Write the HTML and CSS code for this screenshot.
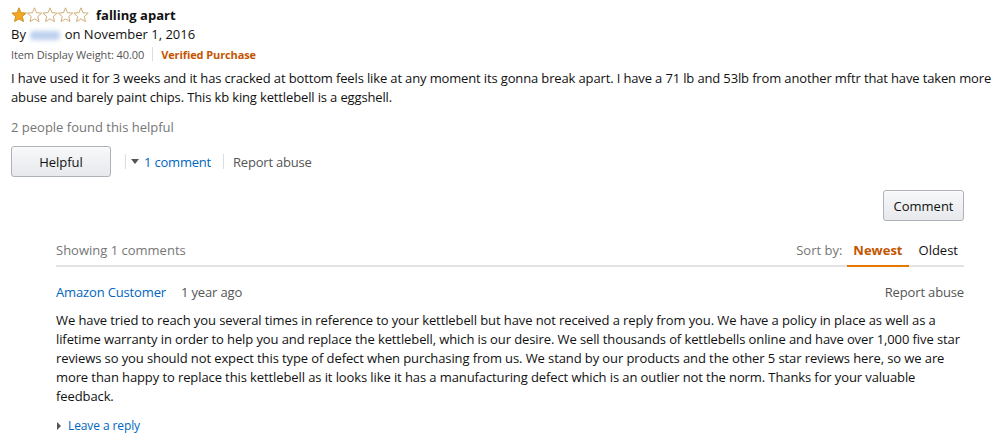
FILE: index.html
```html
<!DOCTYPE html>
<html>
<head>
<meta charset="utf-8">
<link rel="stylesheet" href="styles.css">
</head>
<body>
<div class="review">
  <div class="title-row">
    <span class="stars">
      <svg width="80" height="16" viewBox="0 0 80 16">
        <defs>
          <path id="st" d="M8 0.8 L10 5.7 L15.2 6.1 L11.3 9.5 L12.5 14.6 L8 11.9 L3.5 14.6 L4.7 9.5 L0.8 6.1 L6 5.7 Z"/>
        </defs>
        <use href="#st" x="0" y="0" fill="#f5a623" stroke="#c88a1c" stroke-width="0.9"/>
        <use href="#st" x="15.5" y="0" fill="none" stroke="#c9a56a" stroke-width="0.9"/>
        <use href="#st" x="31" y="0" fill="none" stroke="#c9a56a" stroke-width="0.9"/>
        <use href="#st" x="46.5" y="0" fill="none" stroke="#c9a56a" stroke-width="0.9"/>
        <use href="#st" x="62" y="0" fill="none" stroke="#c9a56a" stroke-width="0.9"/>
      </svg>
    </span>
    <span class="title">falling apart</span>
  </div>
  <div class="byline">By <span class="blur"></span> on November 1, 2016</div>
  <div class="meta"><span>Item Display Weight: 40.00</span><span class="vsep"></span><span class="verified">Verified Purchase</span></div>
  <div class="body">I have used it for 3 weeks and it has cracked at bottom feels like at any moment its gonna break apart. I have a 71 lb and 53lb from another mftr that have taken more abuse and barely paint chips. This kb king kettlebell is a eggshell.</div>
  <div class="helpful-count">2 people found this helpful</div>
  <div class="actions">
    <button class="btn helpful">Helpful</button>
    <span class="vsep tall first"></span>
    <span class="caret-down"></span>
    <a class="link">1 comment</a>
    <span class="vsep tall second"></span>
    <span class="muted-link">Report abuse</span>
  </div>
  <div class="comment-btn-row">
    <button class="btn comment">Comment</button>
  </div>
  <div class="comments">
    <div class="comments-head">
      <span class="showing">Showing 1 comments</span>
      <div class="sort">
        <span class="sort-label">Sort by:</span>
        <span class="tab active">Newest</span>
        <span class="tab">Oldest</span>
      </div>
    </div>
    <div class="comment">
      <div class="comment-head">
        <span class="author">Amazon Customer</span>
        <span class="age">1 year ago</span>
        <span class="muted-link right">Report abuse</span>
      </div>
      <div class="comment-body">We have tried to reach you several times in reference to your kettlebell but have not received a reply from you. We have a policy in place as well as a lifetime warranty in order to help you and replace the kettlebell, which is our desire. We sell thousands of kettlebells online and have over 1,000 five star reviews so you should not expect this type of defect when purchasing from us. We stand by our products and the other 5 star reviews here, so we are more than happy to replace this kettlebell as it looks like it has a manufacturing defect which is an outlier not the norm. Thanks for your valuable feedback.</div>
      <div class="reply"><span class="caret-right"></span><a class="link">Leave a reply</a></div>
    </div>
  </div>
</div>
</body>
</html>
```

FILE: styles.css
```css
* { box-sizing: border-box; }
html, body { margin: 0; padding: 0; background: #fff; }
body {
  font-family: "Open Sans", "Noto Sans", Arial, sans-serif;
  font-size: 13px;
  color: #111;
  width: 1003px;
  height: 440px;
  overflow: hidden;
}
.review { padding: 5px 11px 0 11px; }
.title-row { display: flex; align-items: center; height: 20px; }
.stars { display: flex; width: 85px; }
.stars svg { display: block; }
.title { font-weight: 700; font-size: 13px; color: #111; }
.byline { height: 19px; line-height: 19px; color: #111; }
.blur {
  display: inline-block; width: 30px; height: 9px; vertical-align: middle;
  background: #bcd0ee; border-radius: 4px; filter: blur(2px); margin: 0 1px;
}
.meta { display: flex; align-items: center; font-size: 11px; height: 20px; color: #555; letter-spacing: -0.1px; }
.vsep { display: inline-block; width: 1px; height: 14px; background: #ddd; margin: 0 8px; }
.verified { color: #c45500; font-weight: 700; }
.body { margin-top: 5px; line-height: 19px; width: 985px; letter-spacing: -0.14px; }
.helpful-count { margin-top: 11px; color: #767676; line-height: 19px; }
.actions { display: flex; align-items: center; margin-top: 9px; height: 31px; letter-spacing: -0.2px; }
.btn {
  font-family: inherit; font-size: 13px; color: #111;
  background: linear-gradient(#f7f8fa, #e7e9ec);
  border: 1px solid #adb1b8; border-radius: 3px;
  box-shadow: 0 1px 0 rgba(255,255,255,.6) inset;
  padding: 0; cursor: pointer;
}
.helpful { width: 100px; height: 31px; }
.vsep.tall { height: 15px; }
.vsep.first { margin: 0 5px 0 14px; }
.vsep.second { margin: 0 9px 0 12px; }
.caret-down {
  width: 0; height: 0; border-left: 4px solid transparent; border-right: 4px solid transparent;
  border-top: 5px solid #555; margin-right: 5px;
}
.link { color: #0066c0; text-decoration: none; }
.muted-link { color: #555; }
.comment-btn-row { display: flex; justify-content: flex-end; padding-right: 28px; margin-top: 13px; }
.btn.comment { width: 81px; height: 31px; }
.comments { margin: 13px 28px 0 45px; }
.comments-head {
  display: flex; justify-content: space-between; align-items: flex-end;
  border-bottom: 2px solid #e3e3e3; height: 33px;
}
.showing { color: #767676; line-height: 19px; padding-bottom: 5px; }
.sort { display: flex; align-items: flex-end; }
.sort-label { color: #767676; padding-bottom: 5px; margin-right: 1px; line-height: 19px; }
.tab { padding: 0 6px 5px 6px; line-height: 19px; margin-bottom: -2px; border-bottom: 2px solid transparent; color: #111; margin-left: 4px; }
.tab.active { color: #c45500; font-weight: 700; border-bottom-color: #e77600; }
.comment-head { display: flex; align-items: center; margin-top: 15px; height: 19px; letter-spacing: -0.15px; }
.author { color: #0066c0; }
.age { color: #555; margin-left: 15px; }
.right { margin-left: auto; }
.comment-body { margin-top: 10px; line-height: 19px; letter-spacing: -0.1px; }
.reply { display: flex; align-items: center; margin-top: 11px; font-size: 12px; letter-spacing: -0.1px; }
.caret-right {
  width: 0; height: 0; border-top: 4px solid transparent; border-bottom: 4px solid transparent;
  border-left: 4px solid #555; margin: 0 7px 0 1px;
}
```
